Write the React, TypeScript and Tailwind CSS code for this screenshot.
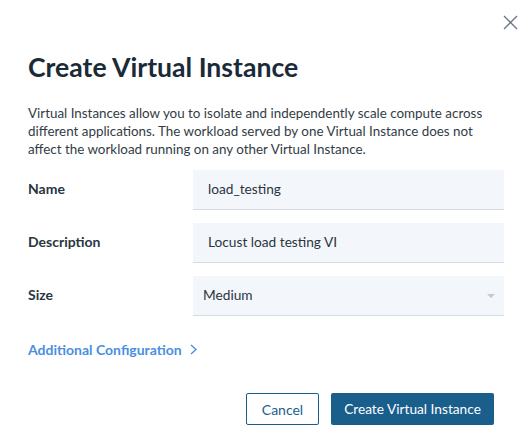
import React from 'react';

const font = { fontFamily: 'Lato, "Noto Sans", sans-serif' };

const Field: React.FC<{ label: string; children: React.ReactNode }> = ({ label, children }) => (
  <div className="flex items-start">
    <div className="w-[165px] shrink-0 pt-[8px] text-[14px] font-bold text-[#2a3540]">{label}</div>
    <div className="flex-1">{children}</div>
  </div>
);

const App: React.FC = () => {
  return (
    <div className="relative w-[532px] h-[448px] bg-white overflow-hidden" style={font}>
      {/* close */}
      <button className="absolute top-[15px] right-[14px] w-[15px] h-[15px] text-[#6b7580]">
        <svg viewBox="0 0 15 15" className="w-[15px] h-[15px]" fill="none" stroke="currentColor" strokeWidth="1.3">
          <path d="M1 1 L14 14 M14 1 L1 14" />
        </svg>
      </button>

      <div className="px-[28px] pt-[51px]">
        <h1 className="text-[26.6px] leading-[32px] font-bold text-[#1b2a38]">Create Virtual Instance</h1>

        <p className="mt-[21px] text-[13.4px] leading-[18px] text-[#333c45]">
          Virtual Instances allow you to isolate and independently scale compute across different applications. The
          workload served by one Virtual Instance does not affect the workload running on any other Virtual Instance.
        </p>

        <div className="mt-[12px] flex flex-col gap-[13px]">
          <Field label="Name">
            <div className="h-[40px] bg-[#f3f7fb] border-b border-[#d3dbe3] flex items-center px-[15px] text-[13.7px] text-[#2a3540]">
              load_testing
            </div>
          </Field>
          <Field label="Description">
            <div className="h-[40px] bg-[#f3f7fb] border-b border-[#d3dbe3] flex items-center px-[15px] text-[13.7px] text-[#2a3540]">
              Locust load testing VI
            </div>
          </Field>
          <Field label="Size">
            <div className="h-[40px] bg-[#f3f7fb] border-b border-[#d3dbe3] flex items-center justify-between pl-[10px] pr-[9px] text-[13.7px] text-[#2a3540]">
              <span>Medium</span>
              <svg viewBox="0 0 8 4" className="w-[8px] h-[4px]">
                <path d="M0 0 H8 L4 4 Z" fill="#c3c8cd" />
              </svg>
            </div>
          </Field>
        </div>

        <button className="mt-[23px] flex items-center gap-[8px] text-[14px] font-bold text-[#4a8fe0]">
          Additional Configuration
          <svg viewBox="0 0 7 11" className="w-[7px] h-[11px]" fill="none" stroke="currentColor" strokeWidth="1.4">
            <path d="M1 1 L6 5.5 L1 10" />
          </svg>
        </button>

        <div className="mt-[33px] flex justify-end gap-[12px] pr-[10px]">
          <button className="h-[32px] w-[73px] border border-[#1a5e8c] rounded-[2px] text-[14px] text-[#1a5e8c] bg-white">
            Cancel
          </button>
          <button className="h-[32px] w-[163px] bg-[#1a5e8c] rounded-[2px] text-[13.7px] text-white">
            Create Virtual Instance
          </button>
        </div>
      </div>
    </div>
  );
};

export default App;
